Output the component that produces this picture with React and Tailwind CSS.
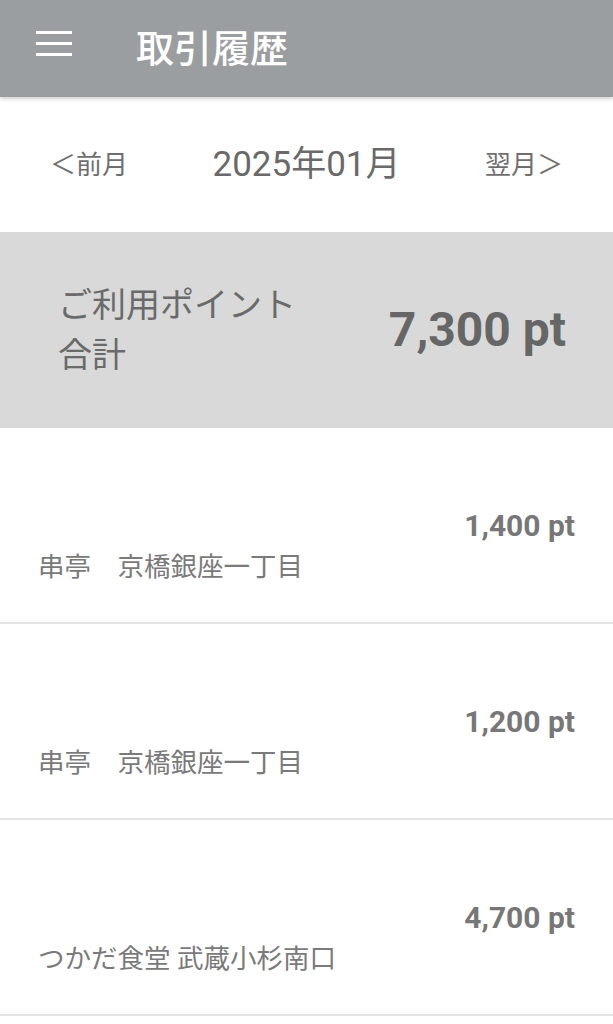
import React from 'react';

const font = { fontFamily: 'Roboto, "Noto Sans CJK JP", sans-serif' };

const history = [
  { id: 1, shop: '串亭　京橋銀座一丁目', points: '1,400 pt' },
  { id: 2, shop: '串亭　京橋銀座一丁目', points: '1,200 pt' },
  { id: 3, shop: 'つかだ食堂 武蔵小杉南口', points: '4,700 pt' },
];

const MenuIcon = () => (
  <div className="flex w-[36px] flex-col gap-[8px] pb-[10px]">
    <span className="block h-[3px] w-full bg-white" />
    <span className="block h-[3px] w-full bg-white" />
    <span className="block h-[3px] w-full bg-white" />
  </div>
);

const App = () => {
  return (
    <div className="min-h-[1024px] w-full bg-white" style={font}>
      <header className="relative z-10 flex h-[97px] items-center bg-[#9b9ea1] pl-[36px] shadow-[0_2px_4px_rgba(0,0,0,0.18)]">
        <MenuIcon />
        <h1 className="ml-[64px] text-[38px] font-medium leading-none text-white">取引履歴</h1>
      </header>

      <nav className="flex h-[135px] items-center justify-between px-[50px] text-[#6e6e6e]">
        <button className="text-[26px] leading-none">＜前月</button>
        <span className="text-[35px] leading-none text-[#696969]">2025年01月</span>
        <button className="text-[26px] leading-none">翌月＞</button>
      </nav>

      <section className="flex h-[196px] items-center justify-between bg-[#d9d9d9] pl-[58px] pr-[47px] text-[#666]">
        <div className="text-[34px] leading-[50px] text-[#6a6a6a]">
          <div>ご利用ポイント</div>
          <div>合計</div>
        </div>
        <div className="text-[48px] font-bold leading-none">7,300 pt</div>
      </section>

      <ul>
        {history.map((item) => (
          <li
            key={item.id}
            className="h-[196px] border-b-2 border-[#e3e3e3] pl-[38px] pr-[38px] pt-[78px]"
          >
            <div className="text-right text-[30px] font-bold leading-[40px] text-[#777]">
              {item.points}
            </div>
            <div className="text-[26.5px] leading-[42px] text-[#7a7a7a]">{item.shop}</div>
          </li>
        ))}
      </ul>
    </div>
  );
};

export default App;
